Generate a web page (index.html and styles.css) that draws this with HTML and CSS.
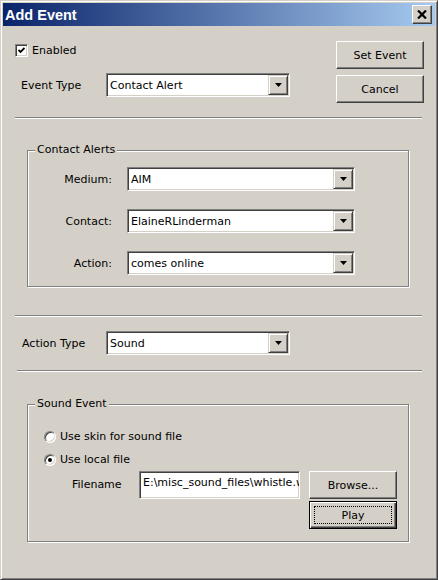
FILE: index.html
```html
<!DOCTYPE html>
<html>
<head>
<meta charset="utf-8">
<title>Add Event</title>
<link rel="stylesheet" href="styles.css">
</head>
<body>
<div class="window">
  <div class="titlebar">
    <span class="title">Add Event</span>
    <span class="close-btn">
      <svg width="10" height="9" viewBox="0 0 10 9"><path d="M1 0.5 L9 8.5 M9 0.5 L1 8.5" stroke="#000" stroke-width="2.2" fill="none"/></svg>
    </span>
  </div>
  <div class="content">
    <div class="top">
      <div class="top-left">
        <div class="check-row">
          <span class="checkbox">
            <svg width="7" height="7" viewBox="0 0 7 7"><path d="M0.5 3 L2.5 5 L6.5 1" stroke="#000" stroke-width="1.8" fill="none"/></svg>
          </span>
          <span>Enabled</span>
        </div>
        <div class="type-row">
          <span class="type-label">Event Type</span>
          <div class="combo combo-short">
            <span class="combo-text">Contact Alert</span>
            <span class="combo-btn"><svg width="7" height="4" viewBox="0 0 7 4"><path d="M0 0 H7 L3.5 4 Z" fill="#000"/></svg></span>
          </div>
        </div>
      </div>
      <div class="top-buttons">
        <div class="btn">Set Event</div>
        <div class="btn">Cancel</div>
      </div>
    </div>

    <div class="sep sep-a"></div>

    <div class="group group-contact">
      <span class="legend">Contact Alerts</span>
      <div class="alert-grid">
        <span class="grid-label">Medium:</span>
        <div class="combo combo-long">
          <span class="combo-text">AIM</span>
          <span class="combo-btn"><svg width="7" height="4" viewBox="0 0 7 4"><path d="M0 0 H7 L3.5 4 Z" fill="#000"/></svg></span>
        </div>
        <span class="grid-label">Contact:</span>
        <div class="combo combo-long">
          <span class="combo-text">ElaineRLinderman</span>
          <span class="combo-btn"><svg width="7" height="4" viewBox="0 0 7 4"><path d="M0 0 H7 L3.5 4 Z" fill="#000"/></svg></span>
        </div>
        <span class="grid-label">Action:</span>
        <div class="combo combo-long">
          <span class="combo-text">comes online</span>
          <span class="combo-btn"><svg width="7" height="4" viewBox="0 0 7 4"><path d="M0 0 H7 L3.5 4 Z" fill="#000"/></svg></span>
        </div>
      </div>
    </div>

    <div class="sep sep-b"></div>

    <div class="action-row">
      <span class="action-label">Action Type</span>
      <div class="combo combo-short">
        <span class="combo-text">Sound</span>
        <span class="combo-btn"><svg width="7" height="4" viewBox="0 0 7 4"><path d="M0 0 H7 L3.5 4 Z" fill="#000"/></svg></span>
      </div>
    </div>

    <div class="sep sep-c"></div>

    <div class="group group-sound">
      <span class="legend">Sound Event</span>
      <div class="radio-row">
        <span class="radio"></span>
        <span>Use skin for sound file</span>
      </div>
      <div class="radio-row">
        <span class="radio radio-on"><span class="radio-dot"></span></span>
        <span>Use local file</span>
      </div>
      <div class="file-row">
        <span class="file-label">Filename</span>
        <div class="file-input">E:\misc_sound_files\whistle.wav</div>
        <div class="file-buttons">
          <div class="btn">Browse...</div>
          <div class="btn btn-default"><span class="focus-rect">Play</span></div>
        </div>
      </div>
    </div>
  </div>
</div>
</body>
</html>
```

FILE: styles.css
```css
html, body {
  margin: 0;
  padding: 0;
  background: #D4D0C8;
}

.window {
  box-sizing: border-box;
  width: 438px;
  height: 580px;
  border: 1px solid;
  border-color: #D4D0C8 #404040 #404040 #D4D0C8;
  box-shadow: inset 1px 1px #FFFFFF, inset -1px -1px #808080;
  padding: 2px;
  background: #D4D0C8;
  font-family: "DejaVu Sans", "Liberation Sans", sans-serif;
  font-size: 11px;
  color: #000;
  overflow: hidden;
}

/* Title bar */
.titlebar {
  height: 23px;
  display: flex;
  align-items: center;
  padding-left: 2px;
  background: linear-gradient(to right, #0A246A, #A6CAF0);
}

.title {
  font-family: "Liberation Sans", Arial, sans-serif;
  font-weight: bold;
  font-size: 14.5px;
  color: #FFFFFF;
}

.close-btn {
  margin-left: auto;
  margin-right: 3px;
  box-sizing: border-box;
  width: 20px;
  height: 19px;
  background: #D4D0C8;
  border: 1px solid;
  border-color: #FFFFFF #404040 #404040 #FFFFFF;
  box-shadow: inset -1px -1px #808080;
  display: flex;
  align-items: center;
  justify-content: center;
}

.close-btn svg {
  display: block;
  margin-top: -1px;
}

/* Content */
.top {
  display: flex;
  padding-top: 15px;
}

.top-left {
  padding-left: 12px;
}

.check-row {
  margin-top: 1px;
  height: 17px;
  display: flex;
  align-items: center;
  gap: 4px;
}

.checkbox {
  box-sizing: border-box;
  width: 13px;
  height: 13px;
  background: #FFFFFF;
  border: 1px solid;
  border-color: #808080 #FFFFFF #FFFFFF #808080;
  box-shadow: inset 1px 1px #404040, inset -1px -1px #D4D0C8;
  display: flex;
  align-items: center;
  justify-content: center;
}

.checkbox svg {
  display: block;
}

.type-row {
  margin-top: 14px;
  display: flex;
  align-items: center;
}

.type-label {
  box-sizing: border-box;
  width: 91px;
  padding-left: 6px;
}

.top-buttons {
  margin-left: auto;
  margin-right: 11px;
  display: flex;
  flex-direction: column;
  gap: 6px;
}

.btn {
  box-sizing: border-box;
  width: 88px;
  height: 28px;
  background: #D4D0C8;
  border: 1px solid;
  border-color: #FFFFFF #404040 #404040 #FFFFFF;
  box-shadow: inset -1px -1px #808080;
  display: flex;
  align-items: center;
  justify-content: center;
}

.btn-default {
  border-color: #000;
  box-shadow: inset 1px 1px #FFFFFF, inset -1px -1px #404040, inset -2px -2px #808080;
}

.focus-rect {
  box-sizing: border-box;
  width: 78px;
  height: 18px;
  border: 1px dotted #000;
  display: flex;
  align-items: center;
  justify-content: center;
}

/* Combo boxes */
.combo {
  box-sizing: border-box;
  height: 24px;
  background: #FFFFFF;
  border: 1px solid;
  border-color: #808080 #FFFFFF #FFFFFF #808080;
  box-shadow: inset 1px 1px #404040, inset -1px -1px #D4D0C8;
  padding: 1px 1px 1px 3px;
  display: flex;
  align-items: stretch;
}

.combo-short {
  width: 184px;
}

.combo-long {
  width: 228px;
}

.combo-text {
  flex: 1;
  display: flex;
  align-items: center;
  white-space: nowrap;
  overflow: hidden;
}

.combo-btn {
  box-sizing: border-box;
  width: 20px;
  background: #D4D0C8;
  border: 1px solid;
  border-color: #D4D0C8 #404040 #404040 #D4D0C8;
  box-shadow: inset 1px 1px #FFFFFF, inset -1px -1px #808080;
  display: flex;
  align-items: center;
  justify-content: center;
}

.combo-btn svg {
  display: block;
}

/* Separators */
.sep {
  height: 0;
  border-top: 1px solid #808080;
  border-bottom: 1px solid #FFFFFF;
  margin-right: 13px;
}

.sep-a {
  margin-top: 14px;
  margin-left: 12px;
}

.sep-b {
  margin-top: 28px;
  margin-left: 12px;
}

.sep-c {
  margin-top: 15px;
  margin-left: 14px;
}

/* Group boxes */
.group {
  position: relative;
  box-sizing: border-box;
  width: 382px;
  margin-left: 24px;
  border: 1px solid #808080;
  box-shadow: inset 1px 1px #FFFFFF, 1px 1px #FFFFFF;
}

.legend {
  position: absolute;
  top: -8px;
  left: 7px;
  padding: 0 2px;
  line-height: 14px;
  background: #D4D0C8;
}

.group-contact {
  margin-top: 31px;
  padding: 16px 0 11px 0;
}

.alert-grid {
  display: grid;
  grid-template-columns: 84px 228px;
  grid-auto-rows: 24px;
  column-gap: 15px;
  row-gap: 18px;
}

.grid-label {
  display: flex;
  align-items: center;
  justify-content: flex-end;
}

.action-row {
  margin-top: 14px;
  margin-left: 19px;
  display: flex;
  align-items: center;
}

.action-label {
  width: 84px;
}

.group-sound {
  margin-top: 32px;
  padding: 25px 0 12px 16px;
}

.radio-row {
  height: 13px;
  display: flex;
  align-items: center;
  gap: 3px;
}

.radio-row + .radio-row {
  margin-top: 10px;
}

.radio {
  box-sizing: border-box;
  width: 12px;
  height: 12px;
  border-radius: 50%;
  background: #FFFFFF;
  border: 1px solid;
  border-color: #808080 #FFFFFF #FFFFFF #808080;
  box-shadow: inset 1px 1px #404040, inset -1px -1px #D4D0C8;
  display: flex;
  align-items: center;
  justify-content: center;
  margin-right: 1px;
}

.radio-dot {
  width: 4px;
  height: 4px;
  border-radius: 50%;
  background: #000;
}

.file-row {
  margin-top: 5px;
  margin-left: 28px;
  display: flex;
  align-items: flex-start;
}

.file-label {
  width: 67px;
  line-height: 28px;
}

.file-input {
  box-sizing: border-box;
  width: 161px;
  height: 28px;
  background: #FFFFFF;
  border: 1px solid;
  border-color: #808080 #FFFFFF #FFFFFF #808080;
  box-shadow: inset 1px 1px #404040, inset -1px -1px #D4D0C8;
  padding: 4px 0 0 3px;
  line-height: 14px;
  white-space: nowrap;
  overflow: hidden;
}

.file-buttons {
  margin-left: 9px;
  display: flex;
  flex-direction: column;
  gap: 2px;
}
```
